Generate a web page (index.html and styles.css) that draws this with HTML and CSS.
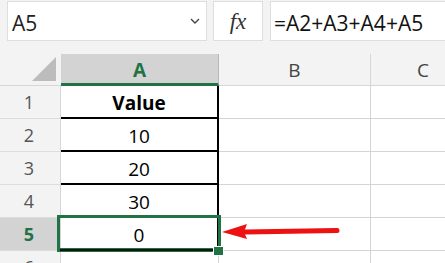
FILE: index.html
```html
<!DOCTYPE html>
<html>
<head>
<meta charset="utf-8">
<link rel="stylesheet" href="styles.css">
</head>
<body>
<div class="app">
  <div class="toolbar">
    <div class="namebox">
      <span class="name">A5</span>
      <svg class="chev" width="10" height="6" viewBox="0 0 10 6"><polyline points="1,1 5,5 9,1" fill="none" stroke="#444" stroke-width="1.4"/></svg>
    </div>
    <div class="fxbox"><i>fx</i></div>
    <div class="formula">=A2+A3+A4+A5</div>
  </div>
  <div class="sheet">
    <div class="corner"><svg width="25" height="25" viewBox="0 0 25 25"><polygon points="24,0 24,24 0,24" fill="#bcbcbc"/></svg></div>
    <div class="colh selh">A</div>
    <div class="colh">B</div>
    <div class="colh">C</div>

    <div class="rowh">1</div><div class="cell a bold">Value</div><div class="cell"></div><div class="cell"></div>
    <div class="rowh">2</div><div class="cell a">10</div><div class="cell"></div><div class="cell"></div>
    <div class="rowh">3</div><div class="cell a">20</div><div class="cell"></div><div class="cell"></div>
    <div class="rowh">4</div><div class="cell a">30</div><div class="cell"></div><div class="cell"></div>
    <div class="rowh selr">5</div><div class="cell a">0</div><div class="cell"></div><div class="cell"></div>
    <div class="rowh">6</div><div class="cell"></div><div class="cell"></div><div class="cell"></div>

    <div class="selection"></div>
    <div class="handle"></div>
    <svg class="arrow" width="130" height="28" viewBox="0 0 130 28">
      <line x1="30" y1="14" x2="122" y2="12.5" stroke="#ee1111" stroke-width="5" stroke-linecap="round"/>
      <polygon points="7,14 32,6 29,14 32,21" fill="#ee1111"/>
    </svg>
  </div>
</div>
</body>
</html>
```

FILE: styles.css
```css
html, body {
  margin: 0;
  padding: 0;
}
body {
  width: 445px;
  height: 263px;
  overflow: hidden;
  background: #f3f3f3;
  font-family: "Open Sans", "Noto Sans", sans-serif;
}
.app {
  width: 445px;
  height: 263px;
  overflow: hidden;
}
.toolbar {
  display: flex;
  align-items: flex-start;
  height: 54px;
  box-sizing: border-box;
  padding: 1px 0 0 7px;
}
.namebox, .fxbox, .formula {
  flex: none;
  height: 40px;
  box-sizing: border-box;
  background: #fff;
  border: 1px solid #dedede;
  display: flex;
  align-items: center;
}
.namebox {
  width: 200px;
  padding: 4px 5px 0 4px;
  justify-content: space-between;
}
.name {
  font-size: 21px;
  color: #222;
}
.chev {
  margin: -4px 1px 0 0;
}
.fxbox {
  width: 50px;
  margin-left: 6px;
  justify-content: center;
}
.fxbox i {
  font-family: "Liberation Serif", "DejaVu Serif", serif;
  font-size: 23px;
  color: #333;
  margin-top: 1px;
}
.formula {
  width: 200px;
  margin-left: 7px;
  padding: 4px 0 0 3px;
  font-size: 21px;
  color: #111;
  white-space: nowrap;
}
.sheet {
  position: relative;
  display: grid;
  grid-template-columns: 61px 158px 152px 105px;
  grid-template-rows: 32px repeat(6, 33px);
  width: 476px;
}
.corner {
  background: #f3f3f3;
  border-bottom: 1px solid #d6d6d6;
  display: flex;
  justify-content: flex-end;
  align-items: flex-end;
  padding: 0 4px 3px 0;
  box-sizing: border-box;
}
.colh {
  background: #f3f3f3;
  border-right: 1px solid #d6d6d6;
  border-bottom: 1px solid #d6d6d6;
  box-sizing: border-box;
  display: flex;
  justify-content: center;
  align-items: center;
  font-size: 19px;
  color: #444;
  padding-top: 1px;
}
.colh.selh {
  background: #d3d3d3;
  border-right: 1px solid #b8b8b8;
  border-bottom: 3px solid #217346;
  color: #217346;
  font-weight: 700;
  padding-top: 2px;
}
.rowh {
  background: #f3f3f3;
  border-right: 1px solid #d6d6d6;
  border-bottom: 1px solid #dcdcdc;
  box-sizing: border-box;
  display: flex;
  justify-content: center;
  align-items: center;
  font-size: 18px;
  color: #555;
  padding-right: 2px;
}
.rowh.selr {
  background: #d3d3d3;
  color: #217346;
  font-weight: 700;
}
.cell {
  background: #fff;
  border-right: 1px solid #d4d4d4;
  border-bottom: 1px solid #d4d4d4;
  box-sizing: border-box;
  display: flex;
  justify-content: center;
  align-items: center;
  font-size: 19px;
  color: #000;
}
.cell.a {
  border-right: 2px solid #000;
  border-bottom: 2px solid #000;
  padding-top: 2px;
}
.cell.bold {
  font-weight: 700;
}
.selection {
  position: absolute;
  left: 57px;
  top: 161px;
  width: 164px;
  height: 37px;
  box-sizing: border-box;
  border: 3px solid #217346;
  border-bottom-width: 4px;
}
.selection::after {
  content: "";
  position: absolute;
  left: 0;
  right: -3px;
  bottom: -3px;
  height: 2px;
  background: #111;
}
.handle {
  position: absolute;
  left: 214px;
  top: 193px;
  width: 9px;
  height: 8px;
  background: #217346;
  box-shadow: 0 0 0 1px #fff;
}
.arrow {
  position: absolute;
  left: 215px;
  top: 164px;
}
```
